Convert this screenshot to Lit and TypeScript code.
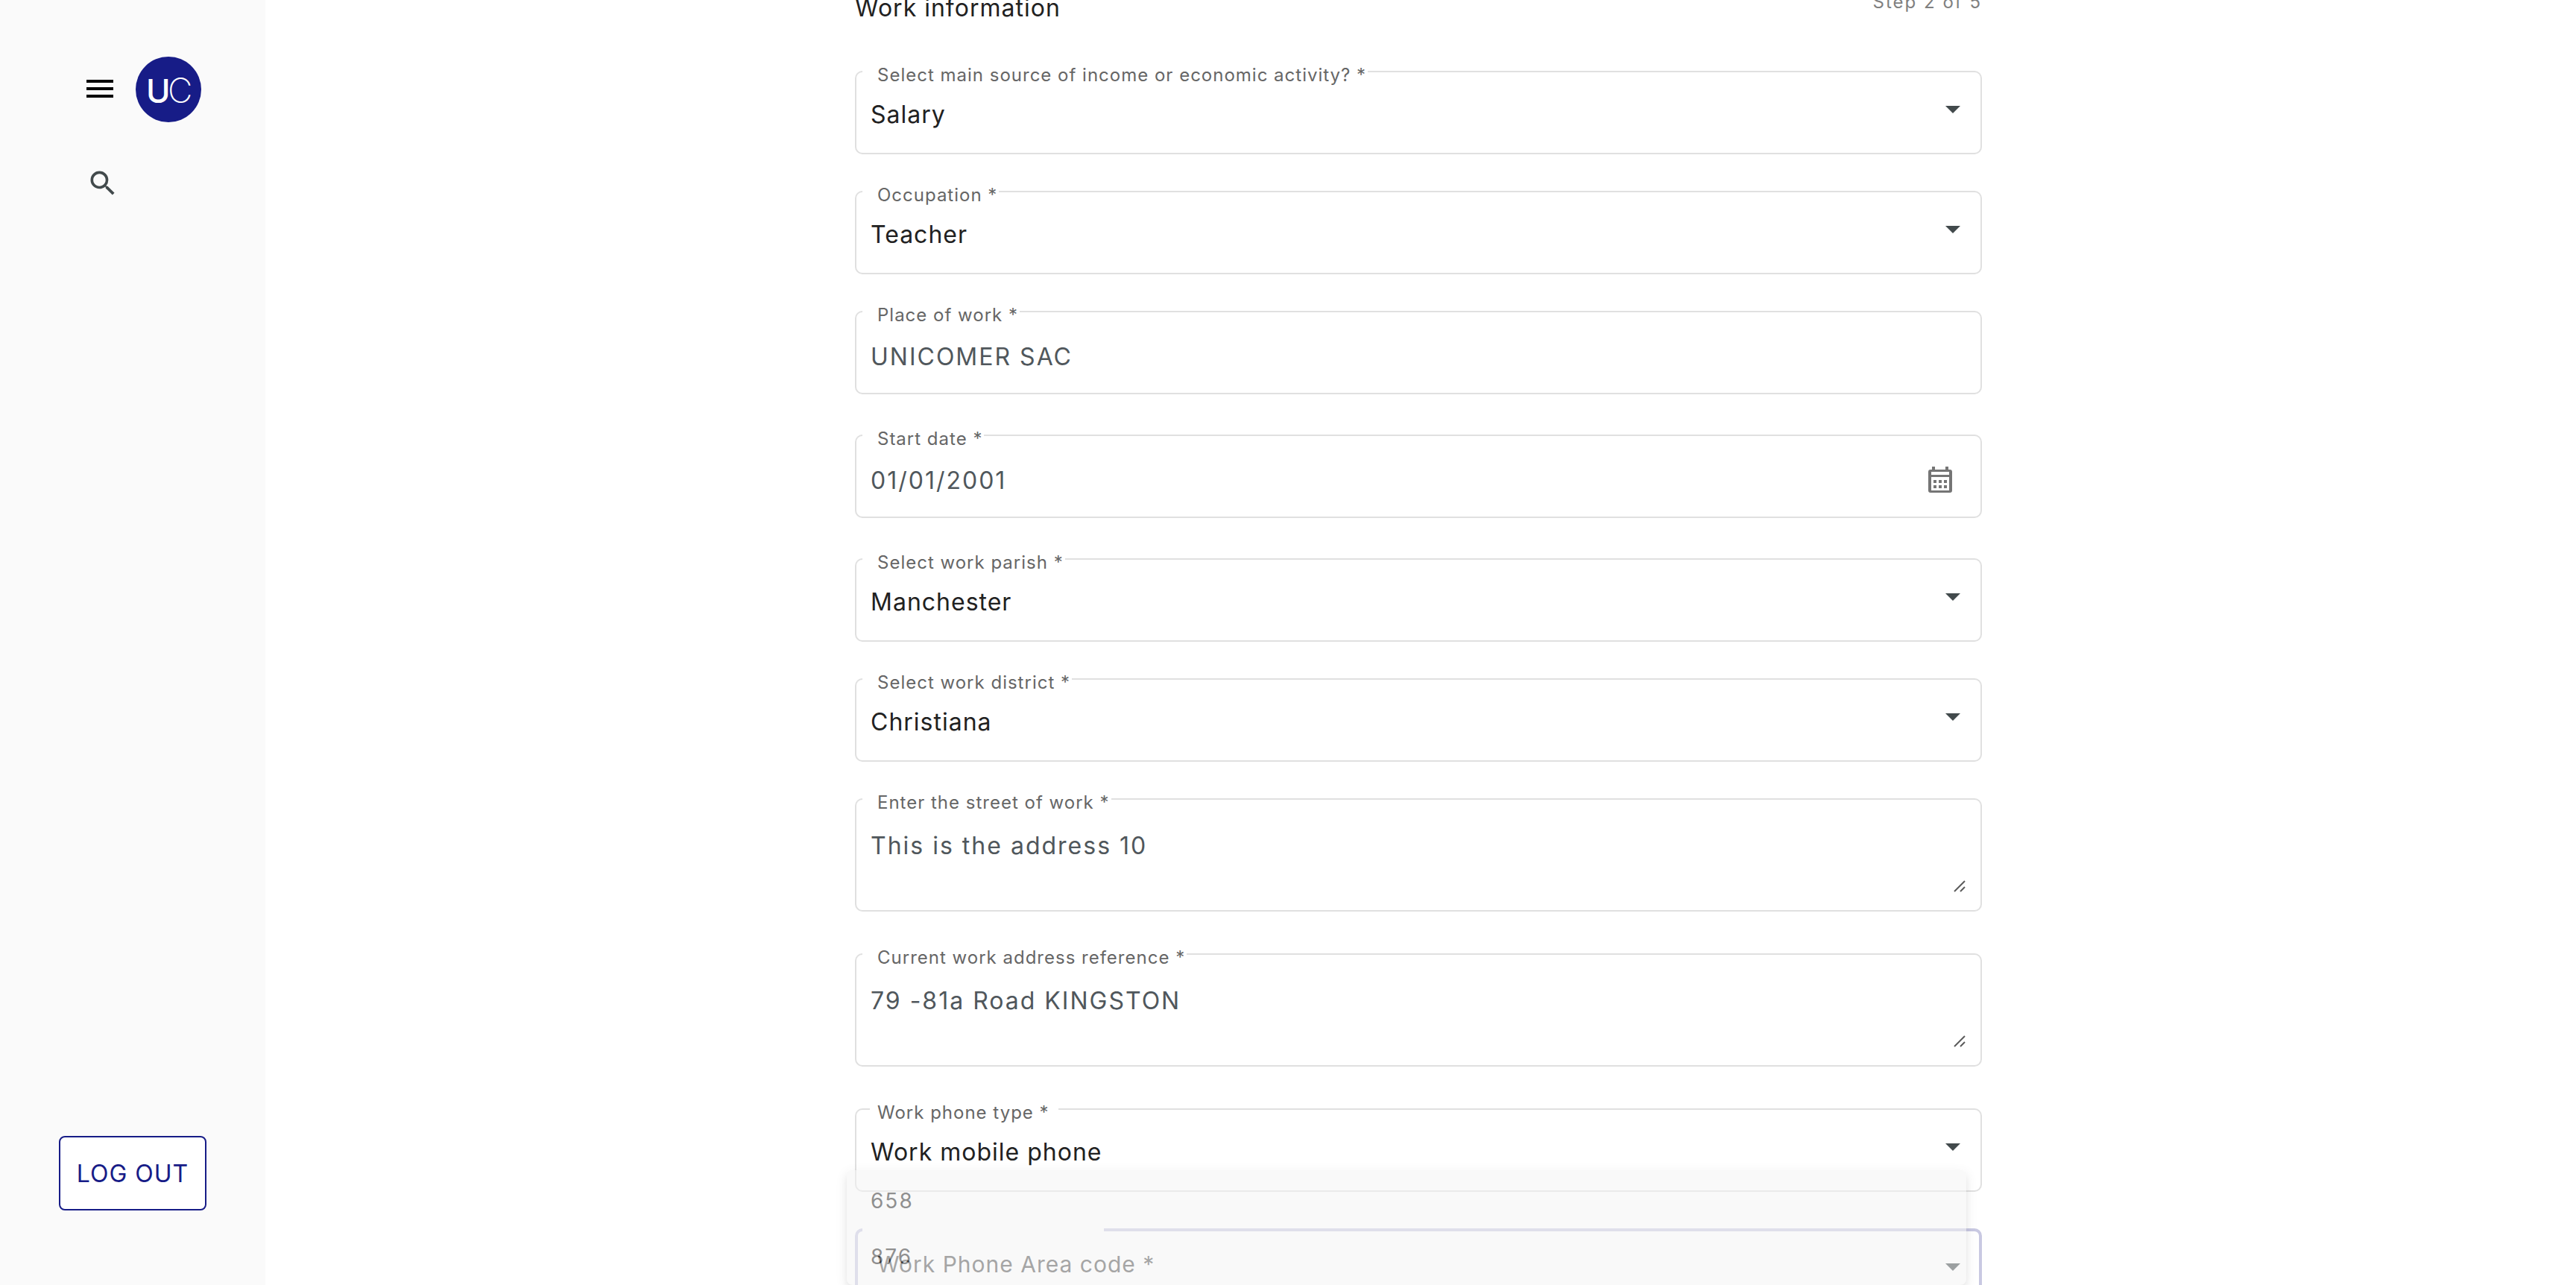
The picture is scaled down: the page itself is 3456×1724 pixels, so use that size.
import { LitElement, html, svg, css, nothing } from "lit";
import { customElement } from "lit/decorators.js";
import { classMap } from "lit/directives/class-map.js";

type Kind = "select" | "input" | "date" | "textarea";

interface Field {
  id: string;
  kind: Kind;
  label: string;
  value: string;
  state?: "settling" | "opening";
  options?: string[];
}

const FIELDS: Field[] = [
  { id: "income", kind: "select", label: "Select main source of income or economic activity?", value: "Salary" },
  { id: "occupation", kind: "select", label: "Occupation", value: "Teacher" },
  { id: "place", kind: "input", label: "Place of work", value: "UNICOMER SAC" },
  { id: "start", kind: "date", label: "Start date", value: "01/01/2001" },
  { id: "parish", kind: "select", label: "Select work parish", value: "Manchester" },
  { id: "district", kind: "select", label: "Select work district", value: "Christiana" },
  { id: "street", kind: "textarea", label: "Enter the street of work", value: "This is the address 10" },
  { id: "reference", kind: "textarea", label: "Current work address reference", value: "79 -81a Road KINGSTON" },
  { id: "phone-type", kind: "select", label: "Work phone type", value: "Work mobile phone", state: "settling" },
  { id: "area-code", kind: "select", label: "Work Phone Area code", value: "", state: "opening", options: ["658", "876"] },
];

@customElement("app-root")
export class AppRoot extends LitElement {
  static styles = css`
    :host {
      display: flex;
      height: 100vh;
      overflow: hidden;
      background: #fff;
      color: #212121;
      font-family: Inter, "Liberation Sans", sans-serif;
      font-size: 32px;
      letter-spacing: 1px;
    }
    * {
      box-sizing: border-box;
    }
    button,
    input,
    select,
    textarea {
      margin: 0;
      font: inherit;
      letter-spacing: inherit;
    }
    svg {
      display: block;
    }
    .sidebar {
      flex: none;
      display: flex;
      flex-direction: column;
      width: 356px;
      padding: 76px 79px 100px;
      background: #fafafa;
    }
    .brand {
      display: flex;
      align-items: center;
      gap: 24px;
      padding-left: 31px;
    }
    .icon-button {
      padding: 0;
      border: 0;
      background: none;
      cursor: pointer;
    }
    .search {
      align-self: flex-start;
      margin: 60px 0 0 37px;
      color: #424a4c;
    }
    .logout {
      height: 100px;
      margin-top: auto;
      padding: 0;
      border: 2px solid #171c87;
      border-radius: 8px;
      background: #fff;
      color: #171c87;
      white-space: nowrap;
      cursor: pointer;
    }
    .main {
      flex: 1;
      display: flex;
      justify-content: center;
      min-width: 0;
      padding-right: 6px;
    }
    .form {
      width: 100%;
      max-width: 1512px;
    }
    .header {
      display: flex;
      justify-content: space-between;
      align-items: flex-start;
      margin: -9px 0 64px;
    }
    .title {
      margin: 0;
      font-size: 32px;
      line-height: 40px;
      font-weight: 400;
    }
    .step {
      margin: 0;
      color: #808080;
      font-size: 24px;
      line-height: 24px;
      letter-spacing: 2px;
    }
    .field {
      position: relative;
      display: grid;
      height: 112px;
      margin-bottom: 49px;
      --line: 2px solid #e0e0e0;
    }
    .field.input,
    .field.date {
      margin-bottom: 54px;
    }
    .field.textarea {
      height: 152px;
      margin-bottom: 56px;
    }
    .outline,
    .control {
      grid-area: 1 / 1;
    }
    .outline {
      display: flex;
      min-width: 0;
      pointer-events: none;
    }
    .edge-start {
      flex: none;
      width: 10px;
      border: var(--line);
      border-right: 0;
      border-radius: 10px 0 0 10px;
    }
    .notch {
      flex: none;
      padding: 0 2px 0 20px;
      border-bottom: var(--line);
    }
    .edge-end {
      flex: 1;
      border: var(--line);
      border-left: 0;
      border-radius: 0 10px 10px 0;
    }
    .label {
      display: block;
      margin-top: -6px;
      color: #666;
      font-size: 24px;
      line-height: 24px;
      white-space: nowrap;
    }
    .settling .edge-start {
      width: 20px;
    }
    .settling .notch {
      padding: 0 12px 0 10px;
    }
    .opening {
      --line: 4px solid #c9c9e2;
    }
    .opening .notch {
      width: 324px;
    }
    .opening .label {
      margin-top: 36px;
      color: #555;
      font-size: 30px;
    }
    .control {
      width: 100%;
      height: 100%;
      padding: 10px 21px 0;
      border: 0;
      outline: 0;
      background: transparent;
      color: #50575c;
      line-height: 36px;
      letter-spacing: 2px;
      appearance: none;
      resize: none;
    }
    select.control {
      padding-top: 6px;
      color: #212121;
      letter-spacing: 1px;
    }
    textarea.control {
      padding-top: 46px;
    }
    .arrow,
    .calendar,
    .grip {
      position: absolute;
    }
    .arrow {
      top: 47px;
      right: 29px;
      color: #424a4c;
      pointer-events: none;
    }
    .calendar {
      top: 43px;
      right: 40px;
      color: #757575;
    }
    .grip {
      right: 22px;
      bottom: 26px;
      pointer-events: none;
    }
    .panel {
      position: absolute;
      z-index: 1;
      top: -78px;
      left: -11px;
      right: 21px;
      margin: 0;
      padding: 4px 21px 0;
      height: 154px;
      border-radius: 8px;
      background: #f5f5f5;
      box-shadow: 0 6px 10px rgba(0, 0, 0, 0.14), 0 4px 16px rgba(0, 0, 0, 0.1);
      opacity: 0.5;
      list-style: none;
    }
    .option {
      padding: 0 11px;
      font-size: 28px;
      line-height: 75px;
      letter-spacing: 2px;
    }
  `;

  private renderArrow() {
    return svg`<svg class="arrow" width="20" height="10" viewBox="0 0 20 10" aria-hidden="true">
      <path d="M0 0h20L10 10z" fill="currentColor" />
    </svg>`;
  }

  private renderControl(f: Field) {
    switch (f.kind) {
      case "select":
        return html`
          <select id=${f.id} class="control" required>
            ${f.value ? html`<option selected>${f.value}</option>` : html`<option value="" selected></option>`}
          </select>
          ${this.renderArrow()}
        `;
      case "textarea":
        return html`
          <textarea id=${f.id} class="control" required .value=${f.value}></textarea>
          <svg class="grip" width="16" height="16" viewBox="0 0 16 16" aria-hidden="true">
            <path d="M1 15L15 1M9 15L15 9" fill="none" stroke="#5c5c5c" stroke-width="2" />
          </svg>
        `;
      default:
        return html`
          <input id=${f.id} class="control" type="text" required .value=${f.value} />
          ${f.kind === "date"
            ? html`<button class="icon-button calendar" type="button" aria-label="Open calendar">
                <svg width="32" height="36" viewBox="0 0 32 36" aria-hidden="true">
                  <path
                    fill="currentColor"
                    fill-rule="evenodd"
                    d="M5 0h4v4h14V0h4v4h2a3 3 0 0 1 3 3v25a3 3 0 0 1-3 3H3a3 3 0 0 1-3-3V7a3 3 0 0 1 3-3h2zM4 7v4h24V7zM4 14v18h24V14zM7 18h4v4H7zM14 18h4v4h-4zM21 18h4v4h-4zM7 25h4v4H7zM14 25h4v4h-4zM21 25h4v4h-4z"
                  />
                </svg>
              </button>`
            : nothing}
        `;
    }
  }

  private renderField(f: Field) {
    const classes = { field: true, [f.kind]: true, [f.state ?? "resting"]: true };
    return html`
      <div class=${classMap(classes)}>
        ${this.renderControl(f)}
        <div class="outline">
          <span class="edge-start"></span>
          <span class="notch"><label class="label" for=${f.id}>${f.label} *</label></span>
          <span class="edge-end"></span>
        </div>
        ${f.options
          ? html`<ul class="panel" role="listbox" aria-label=${f.label}>
              ${f.options.map((o) => html`<li class="option" role="option">${o}</li>`)}
            </ul>`
          : nothing}
      </div>
    `;
  }

  render() {
    return html`
      <nav class="sidebar">
        <div class="brand">
          <button class="icon-button" type="button" aria-label="Menu">
            <svg width="48" height="48" viewBox="0 0 48 48" aria-hidden="true">
              <path d="M6 11h36v4H6zM6 21h36v4H6zM6 31h36v4H6z" fill="#000" />
            </svg>
          </button>
          <svg width="88" height="88" viewBox="0 0 88 88" role="img" aria-label="UC">
            <circle cx="44" cy="44" r="44" fill="#171c87" />
            <g fill="#fff" font-family="Inter" letter-spacing="0">
              <text x="14" y="62" font-size="44" font-weight="500">U</text>
              <text x="43" y="62" font-size="46" font-weight="200">C</text>
            </g>
          </svg>
        </div>
        <button class="icon-button search" type="button" aria-label="Search">
          <svg width="44" height="44" viewBox="0 0 24 24" aria-hidden="true">
            <path
              fill="currentColor"
              d="M15.5 14h-.79l-.28-.27A6.471 6.471 0 0 0 16 9.5 6.5 6.5 0 1 0 9.5 16c1.61 0 3.09-.59 4.23-1.57l.27.28v.79l5 4.99L20.49 19l-4.99-5zm-6 0C7.01 14 5 11.99 5 9.5S7.01 5 9.5 5 14 7.01 14 9.5 11.99 14 9.5 14z"
            />
          </svg>
        </button>
        <button class="logout" type="button">LOG OUT</button>
      </nav>
      <main class="main">
        <form class="form">
          <header class="header">
            <h1 class="title">Work information</h1>
            <p class="step">Step 2 of 5</p>
          </header>
          ${FIELDS.map((f) => this.renderField(f))}
        </form>
      </main>
    `;
  }
}
